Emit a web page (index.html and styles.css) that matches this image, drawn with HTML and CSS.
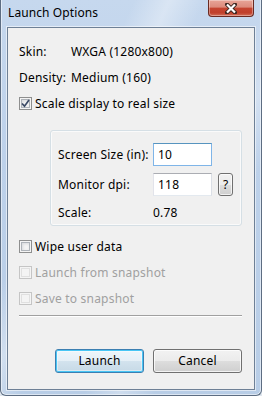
FILE: index.html
```html
<!DOCTYPE html>
<html>
<head>
<meta charset="utf-8">
<link rel="stylesheet" href="styles.css">
</head>
<body>
<div class="window">
  <div class="titlebar">
    <span class="title">Launch Options</span>
    <div class="close">
      <svg width="12" height="11" viewBox="0 0 12 11">
        <path d="M2 1.5 L10 9.5 M10 1.5 L2 9.5" stroke="#3d2620" stroke-width="4" stroke-linecap="square" fill="none"/>
        <path d="M2 1.5 L10 9.5 M10 1.5 L2 9.5" stroke="#ffffff" stroke-width="2.2" stroke-linecap="butt" fill="none"/>
      </svg>
    </div>
  </div>
  <div class="client">
    <div class="row"><span class="lbl">Skin:</span><span>WXGA (1280x800)</span></div>
    <div class="row"><span class="lbl">Density:</span><span>Medium (160)</span></div>
    <div class="row"><span class="cb"><svg width="9" height="9" viewBox="0 0 9 9"><path d="M1 4.5 L3.5 7.2 L8 1" stroke="#3b4a66" stroke-width="1.7" fill="none"/></svg></span>Scale display to real size</div>
    <div class="group">
      <div class="grow"><span class="glbl">Screen Size (in):</span><span class="input focus">10</span></div>
      <div class="grow"><span class="glbl">Monitor dpi:</span><span class="input">118</span><span class="qbtn">?</span></div>
      <div class="grow scale"><span class="glbl">Scale:</span><span>0.78</span></div>
    </div>
    <div class="row first"><span class="cb"></span>Wipe user data</div>
    <div class="row disabled"><span class="cb"></span>Launch from snapshot</div>
    <div class="row disabled"><span class="cb"></span>Save to snapshot</div>
    <div class="sep"></div>
    <div class="buttons">
      <div class="btn default">Launch</div>
      <div class="btn">Cancel</div>
    </div>
  </div>
</div>
</body>
</html>
```

FILE: styles.css
```css
html, body {
  margin: 0;
  padding: 0;
}
body {
  width: 262px;
  height: 396px;
  overflow: hidden;
  background: #dfe6ee;
  font-family: "Segoe UI", "Noto Sans", "Open Sans", sans-serif;
  font-size: 12px;
  color: #000;
}
.window {
  box-sizing: border-box;
  width: 262px;
  height: 396px;
  display: flex;
  flex-direction: column;
  border: 1px solid #5d6d82;
  border-top: 0;
  border-radius: 0 0 6px 6px;
  padding: 0 6px 5px 6px;
  background:
    linear-gradient(115deg, rgba(255,255,255,0) 30%, rgba(255,255,255,0.35) 38%, rgba(255,255,255,0) 46%, rgba(255,255,255,0) 60%, rgba(255,255,255,0.3) 68%, rgba(255,255,255,0) 76%),
    linear-gradient(180deg, #c6d8ee 0%, #bdd1ea 40%, #b8cde6 100%);
  box-shadow: inset 1px 0 0 rgba(255,255,255,0.5), inset -1px 0 0 rgba(255,255,255,0.5), inset 0 -1px 0 rgba(255,255,255,0.5);
}
.titlebar {
  height: 27px;
  flex: none;
  display: flex;
  justify-content: space-between;
  align-items: flex-start;
}
.title {
  padding: 5px 0 0 1px;
  line-height: 16px;
  color: #000;
  letter-spacing: 0.1px;
}
.close {
  width: 46px;
  height: 17px;
  margin-right: 1px;
  box-sizing: border-box;
  border: 1px solid #6a2a22;
  border-top: 0;
  border-radius: 0 0 4px 4px;
  background: linear-gradient(180deg, #e8a598 0%, #dc8b7c 45%, #c54531 50%, #c0402c 80%, #d2705a 100%);
  box-shadow: inset 0 0 0 1px rgba(255,255,255,0.35);
  display: flex;
  align-items: center;
  justify-content: center;
}
.client {
  flex: 1;
  box-sizing: border-box;
  background: #f0f0f0;
  border: 1px solid #6e8096;
  box-shadow: 0 0 0 1px rgba(255,255,255,0.55);
  padding: 10px 12px 0 11px;
  display: flex;
  flex-direction: column;
  letter-spacing: 0.2px;
}
.row {
  height: 26px;
  display: flex;
  align-items: center;
  white-space: nowrap;
}
.row.first {
  margin-top: 7px;
}
.lbl {
  width: 52px;
}
.cb {
  box-sizing: border-box;
  width: 13px;
  height: 13px;
  margin-right: 3px;
  border: 1px solid #8e8f8f;
  background: #f4f4f4;
  box-shadow: inset 0 0 0 1px #f4f4f4, inset 0 0 0 2px #aeb3b9, inset 1px 1px 3px 2px #d8dadd;
  display: flex;
  align-items: center;
  justify-content: center;
}
.disabled {
  color: #a0a0a0;
}
.disabled .cb {
  border-color: #c5c5c5;
  box-shadow: inset 0 0 0 1px #f4f4f4, inset 0 0 0 2px #e0e0e0;
}
.group {
  margin: 14px 0 0 31px;
  box-sizing: border-box;
  border: 1px solid #d5dfe5;
  border-radius: 3px;
  box-shadow: inset 0 0 0 1px #fafafa;
  padding: 12px 0 4px 7px;
  display: flex;
  flex-direction: column;
  gap: 7px;
}
.grow {
  height: 23px;
  display: flex;
  align-items: center;
  white-space: nowrap;
}
.grow.scale {
  height: 18px;
}
.glbl {
  width: 95px;
}
.input {
  box-sizing: border-box;
  width: 59px;
  height: 23px;
  background: #fff;
  border: 1px solid #abadb3;
  border-left-color: #e2e3ea;
  border-right-color: #dbdfe6;
  border-bottom-color: #e3e9ef;
  padding: 0 4px;
  line-height: 21px;
}
.input.focus {
  border-color: #7fb5e8;
  border-top-color: #5794bf;
}
.qbtn {
  box-sizing: border-box;
  width: 15px;
  height: 23px;
  margin-left: 6px;
  border: 1px solid #707070;
  border-radius: 3px;
  background: linear-gradient(180deg, #f2f2f2 0%, #ebebeb 50%, #dddddd 51%, #cfcfcf 100%);
  box-shadow: inset 0 0 0 1px rgba(255,255,255,0.7);
  text-align: center;
  line-height: 21px;
  font-size: 12px;
  letter-spacing: 0;
}
.sep {
  margin-top: 4px;
  height: 0;
  border-top: 1px solid #a0a0a0;
  border-bottom: 1px solid #ffffff;
}
.buttons {
  margin-top: 32px;
  display: flex;
  justify-content: flex-end;
  gap: 9px;
}
.btn {
  box-sizing: border-box;
  width: 89px;
  height: 24px;
  border: 1px solid #707070;
  border-radius: 3px;
  background: linear-gradient(180deg, #f2f2f2 0%, #ebebeb 50%, #dddddd 51%, #cfcfcf 100%);
  box-shadow: inset 0 0 0 1px rgba(255,255,255,0.75);
  text-align: center;
  line-height: 22px;
}
.btn.default {
  border-color: #3c7fb1;
  background: linear-gradient(180deg, #eef6fb 0%, #e5eff6 50%, #d3e3ee 51%, #c6d9e6 100%);
  box-shadow: inset 0 0 0 1px #48c6f5, inset 0 0 0 2px rgba(255,255,255,0.4);
}
```
